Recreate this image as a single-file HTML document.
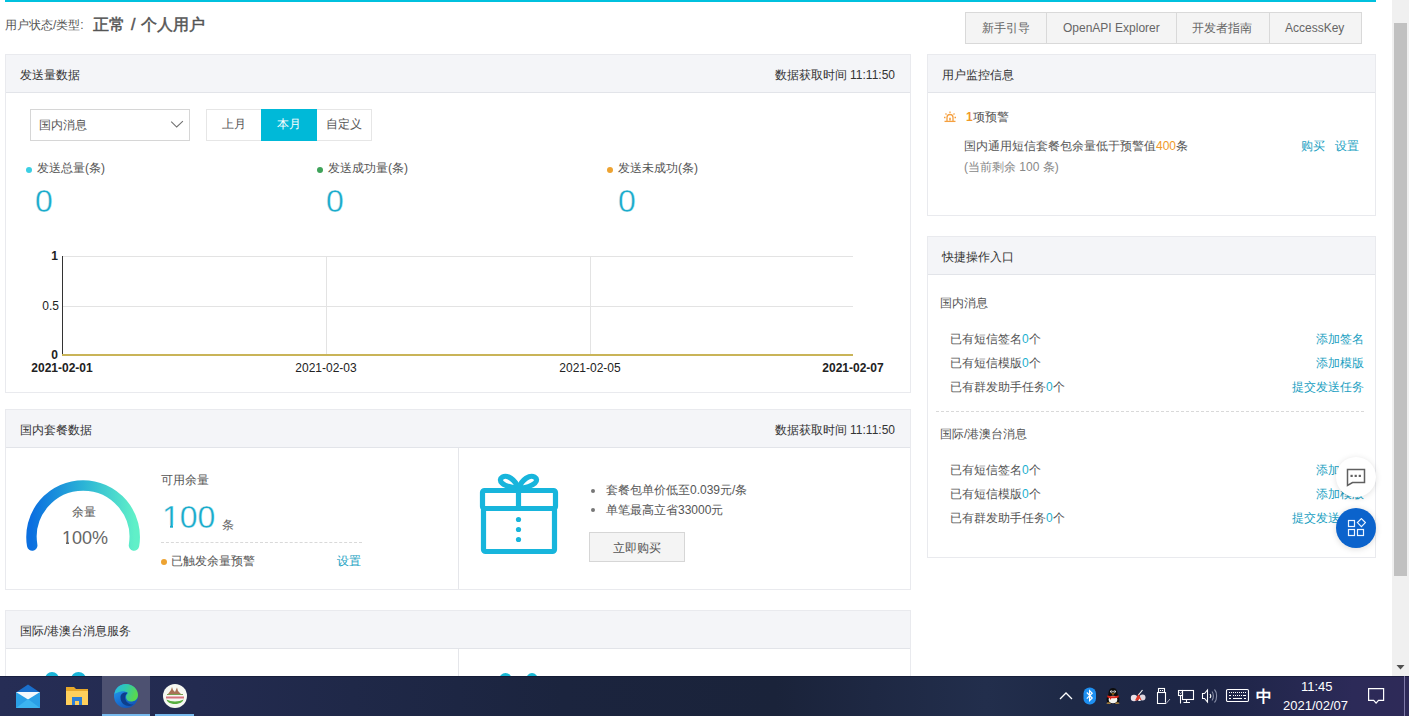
<!DOCTYPE html>
<html><head><meta charset="utf-8">
<style>
*{margin:0;padding:0;box-sizing:border-box}
html,body{width:1409px;height:716px;overflow:hidden;background:#fff}
body{position:relative;font-family:"Liberation Sans",sans-serif;font-size:12px;color:#555}
.a{position:absolute;white-space:nowrap}
.panel{position:absolute;border:1px solid #e9eaee;background:#fff}
.ph{position:absolute;left:0;right:0;top:0;height:38px;background:#f4f5f8;border-bottom:1px solid #e2e4e9}
.pt{position:absolute;left:14px;top:13px;color:#333;font-size:12px;line-height:14px}
.ptime{position:absolute;right:15px;top:13px;color:#333;font-size:12px;line-height:14px}
.link{color:#1b9fc2}
.cy{color:#1bb0d0}
.or{color:#f09a2a}
</style></head>
<body>
<!-- top cyan bar -->
<div class="a" style="left:5px;top:0;width:1371px;height:2px;background:#00c1de"></div>

<div class="a" style="left:5px;top:18px;font-size:12px;line-height:14px;color:#555">用户状态/类型:</div>
<div class="a" style="left:93px;top:15px;font-size:16px;line-height:20px;color:#555;-webkit-text-stroke:0.5px #555;word-spacing:1.5px">正常 / 个人用户</div>

<!-- top-right buttons -->
<div class="a" style="left:965px;top:12px;width:397px;height:32px;background:#f4f4f4;border:1px solid #d9d9d9"></div>
<div class="a" style="left:1046px;top:13px;width:1px;height:30px;background:#d9d9d9"></div>
<div class="a" style="left:1176px;top:13px;width:1px;height:30px;background:#d9d9d9"></div>
<div class="a" style="left:1269px;top:13px;width:1px;height:30px;background:#d9d9d9"></div>
<div class="a" style="left:982px;top:21px;line-height:14px;color:#666">新手引导</div>
<div class="a" style="left:1063px;top:21px;line-height:14px;color:#666">OpenAPI Explorer</div>
<div class="a" style="left:1192px;top:21px;line-height:14px;color:#666">开发者指南</div>
<div class="a" style="left:1285px;top:21px;line-height:14px;color:#666">AccessKey</div>

<!-- panel 1 -->
<div class="panel" style="left:5px;top:54px;width:906px;height:339px">
  <div class="ph"><div class="pt">发送量数据</div><div class="ptime">数据获取时间 11:11:50</div></div>
</div>


<!-- panel1 content -->
<div class="a" style="left:30px;top:109px;width:160px;height:32px;border:1px solid #d6d6d6;background:#fff"></div>
<div class="a" style="left:39px;top:118px;line-height:14px;color:#555">国内消息</div>
<svg class="a" style="left:168px;top:119px" width="16" height="10" viewBox="0 0 16 10"><path d="M3.2 2.6 L8.7 8 L14.9 2.2" fill="none" stroke="#707070" stroke-width="1.05"/></svg>
<div class="a" style="left:206px;top:109px;width:166px;height:32px;border:1px solid #e6e6e6;background:#fff"></div>
<div class="a" style="left:261px;top:109px;width:56px;height:32px;background:#00b9d8"></div>
<div class="a" style="left:222px;top:117px;line-height:14px;color:#555">上月</div>
<div class="a" style="left:277px;top:117px;line-height:14px;color:#fff">本月</div>
<div class="a" style="left:326px;top:117px;line-height:14px;color:#555">自定义</div>

<div class="a" style="left:26px;top:167px;width:6px;height:6px;border-radius:50%;background:#3ccfe4"></div>
<div class="a" style="left:37px;top:161px;line-height:14px;color:#555">发送总量(条)</div>
<div class="a" style="left:35px;top:183px;font-size:32px;line-height:37px;color:#1aabcb;-webkit-text-stroke:0.35px #fff">0</div>
<div class="a" style="left:317px;top:167px;width:6px;height:6px;border-radius:50%;background:#3fa35a"></div>
<div class="a" style="left:328px;top:161px;line-height:14px;color:#555">发送成功量(条)</div>
<div class="a" style="left:326px;top:183px;font-size:32px;line-height:37px;color:#1aabcb;-webkit-text-stroke:0.35px #fff">0</div>
<div class="a" style="left:607px;top:167px;width:6px;height:6px;border-radius:50%;background:#eda331"></div>
<div class="a" style="left:618px;top:161px;line-height:14px;color:#555">发送未成功(条)</div>
<div class="a" style="left:618px;top:183px;font-size:32px;line-height:37px;color:#1aabcb;-webkit-text-stroke:0.35px #fff">0</div>

<!-- chart -->
<svg class="a" style="left:0;top:240px" width="910" height="140" viewBox="0 240 910 140">
  <g stroke="#e3e3e3" stroke-width="1" fill="none">
    <path d="M62 256.5 H853"/>
    <path d="M62 306.5 H853"/>
    <path d="M326.5 256 V355"/>
    <path d="M590.5 256 V355"/>
  </g>
  <path d="M62.5 256 V356" stroke="#333" stroke-width="1"/>
  <path d="M62 355 H853" stroke="#c9b458" stroke-width="2"/>
  <g font-family="Liberation Sans" font-size="12" fill="#222">
    <text x="58" y="260" text-anchor="end" font-weight="bold">1</text>
    <text x="59" y="310" text-anchor="end">0.5</text>
    <text x="58" y="359" text-anchor="end" font-weight="bold">0</text>
    <text x="62" y="372" text-anchor="middle" font-weight="bold">2021-02-01</text>
    <text x="326" y="372" text-anchor="middle">2021-02-03</text>
    <text x="590" y="372" text-anchor="middle">2021-02-05</text>
    <text x="853" y="372" text-anchor="middle" font-weight="bold">2021-02-07</text>
  </g>
</svg>

<!-- right panel 1 -->
<div class="panel" style="left:927px;top:54px;width:449px;height:162px">
  <div class="ph"><div class="pt">用户监控信息</div></div>
</div>

<!-- right panel 2 -->
<div class="panel" style="left:927px;top:236px;width:449px;height:322px">
  <div class="ph"><div class="pt">快捷操作入口</div></div>
</div>

<!-- panel 2 -->
<div class="panel" style="left:5px;top:409px;width:906px;height:181px">
  <div class="ph"><div class="pt">国内套餐数据</div><div class="ptime">数据获取时间 11:11:50</div></div>
</div>

<!-- panel 3 -->
<div class="panel" style="left:5px;top:610px;width:906px;height:120px">
  <div class="ph"><div class="pt">国际/港澳台消息服务</div></div>
</div>


<!-- right panel 1 content -->
<svg class="a" style="left:943px;top:110px" width="14" height="13" viewBox="0 0 14 13">
  <g fill="none" stroke="#f5a040" stroke-width="1.3">
    <path d="M4 11 V7.5 a3 3 0 0 1 6 0 V11"/>
    <path d="M1.5 11.4 H12.5"/>
    <path d="M1 7.5 H2.5 M11.5 7.5 H13 M7 1.5 V3 M2.5 3.5 L3.5 4.5 M11.5 3.5 L10.5 4.5"/>
  </g>
  <path d="M6.2 7.8 h1.6 v2.6 h-1.6z" fill="#f5a040"/>
</svg>
<div class="a" style="left:966px;top:110px;line-height:14px;color:#555"><span class="or" style="font-weight:bold">1</span>项预警</div>
<div class="a" style="left:964px;top:139px;line-height:14px;color:#555">国内通用短信套餐包余量低于预警值<span class="or">400</span>条</div>
<div class="a" style="left:964px;top:160px;line-height:14px;color:#888">(当前剩余 100 条)</div>
<div class="a link" style="left:1301px;top:139px;line-height:14px">购买</div>
<div class="a link" style="left:1335px;top:139px;line-height:14px">设置</div>

<!-- right panel 2 content -->
<div class="a" style="left:940px;top:296px;line-height:14px;color:#555">国内消息</div>
<div class="a" style="left:950px;top:332px;line-height:14px;color:#555">已有短信签名<span class="cy">0</span>个</div>
<div class="a" style="left:950px;top:356px;line-height:14px;color:#555">已有短信模版<span class="cy">0</span>个</div>
<div class="a" style="left:950px;top:380px;line-height:14px;color:#555">已有群发助手任务<span class="cy">0</span>个</div>
<div class="a link" style="right:45px;top:332px;line-height:14px">添加签名</div>
<div class="a link" style="right:45px;top:356px;line-height:14px">添加模版</div>
<div class="a link" style="right:45px;top:380px;line-height:14px">提交发送任务</div>
<div class="a" style="left:936px;top:411px;width:428px;height:0;border-top:1px dashed #d9d9d9"></div>
<div class="a" style="left:940px;top:427px;line-height:14px;color:#555">国际/港澳台消息</div>
<div class="a" style="left:950px;top:463px;line-height:14px;color:#555">已有短信签名<span class="cy">0</span>个</div>
<div class="a" style="left:950px;top:487px;line-height:14px;color:#555">已有短信模版<span class="cy">0</span>个</div>
<div class="a" style="left:950px;top:511px;line-height:14px;color:#555">已有群发助手任务<span class="cy">0</span>个</div>
<div class="a link" style="right:45px;top:463px;line-height:14px">添加签名</div>
<div class="a link" style="right:45px;top:487px;line-height:14px">添加模版</div>
<div class="a link" style="right:45px;top:511px;line-height:14px">提交发送任务</div>

<!-- floating buttons -->
<div class="a" style="left:1336px;top:457px;width:40px;height:40px;border-radius:50%;background:#fff;box-shadow:0 1px 6px rgba(0,0,0,0.12)"></div>
<svg class="a" style="left:1346px;top:468px" width="20" height="19" viewBox="0 0 20 19">
  <path d="M1.5 1.5 H18.5 V14.5 H6.5 L1.5 17.5 Z" fill="none" stroke="#606060" stroke-width="1.5" stroke-linejoin="miter"/>
  <rect x="4.5" y="6.8" width="2.2" height="2.2" fill="#606060"/><rect x="8.6" y="6.8" width="2.2" height="2.2" fill="#606060"/><rect x="12.7" y="6.8" width="2.2" height="2.2" fill="#606060"/>
</svg>
<div class="a" style="left:1336px;top:508px;width:40px;height:40px;border-radius:50%;background:#0b63cc;box-shadow:0 1px 6px rgba(0,0,0,0.15)"></div>
<svg class="a" style="left:1346px;top:518px" width="20" height="20" viewBox="0 0 20 20">
  <g fill="none" stroke="#eef6ff" stroke-width="1.2">
    <rect x="2.5" y="2.5" width="6" height="6"/>
    <rect x="2.5" y="11.5" width="6" height="6"/>
    <rect x="11.5" y="11.5" width="6" height="6"/>
    <path d="M15.4 0.6 L19.4 4.6 L15.4 8.6 L11.4 4.6 Z"/>
  </g>
</svg>

<!-- panel 2 content -->
<svg class="a" style="left:20px;top:472px" width="130" height="85" viewBox="20 472 130 85">
  <defs><linearGradient id="g1" x1="0" y1="0" x2="1" y2="0">
    <stop offset="0" stop-color="#0b6fe0"/><stop offset="0.5" stop-color="#2bb3d6"/><stop offset="1" stop-color="#60f0c8"/>
  </linearGradient></defs>
  <path d="M32.2 545.5 A51.6 51.6 0 1 1 134 545.5" fill="none" stroke="url(#g1)" stroke-width="10.5" stroke-linecap="round"/>
</svg>
<div class="a" style="left:72px;top:505px;line-height:14px;color:#555">余量</div>
<div class="a" style="left:62px;top:528px;font-size:18px;line-height:20px;color:#666">100%</div>
<div class="a" style="left:62px;top:542px;width:4px;height:2px;background:#fff"></div>
<div class="a" style="left:69px;top:542px;width:3px;height:2px;background:#fff"></div>
<div class="a" style="left:161px;top:473px;line-height:14px;color:#555">可用余量</div>
<div class="a" style="left:162px;top:499px;font-size:32px;line-height:36px;color:#1aabcb;-webkit-text-stroke:0.35px #fff">100</div>
<div class="a" style="left:162px;top:525px;width:8px;height:4px;background:#fff"></div>
<div class="a" style="left:173px;top:525px;width:7px;height:4px;background:#fff"></div>
<div class="a" style="left:222px;top:518px;line-height:14px;color:#666">条</div>
<div class="a" style="left:161px;top:542px;width:201px;height:0;border-top:1px dashed #d9d9d9"></div>
<div class="a" style="left:161px;top:559px;width:6px;height:6px;border-radius:50%;background:#eda331"></div>
<div class="a" style="left:171px;top:554px;line-height:14px;color:#555">已触发余量预警</div>
<div class="a link" style="left:337px;top:554px;line-height:14px">设置</div>
<div class="a" style="left:458px;top:448px;width:1px;height:141px;background:#e5e6ea"></div>

<svg class="a" style="left:476px;top:470px" width="86" height="88" viewBox="476 470 86 88">
  <g fill="none" stroke="#17b5dc" stroke-width="5.2" stroke-linejoin="round" stroke-linecap="round">
    <rect x="482.5" y="490.5" width="73" height="18" rx="2"/>
    <rect x="483.5" y="508.5" width="71" height="43" rx="2"/>
    <path d="M518.5 490.5 V508.5"/>
    <path d="M518.5 488.5 C515 479 507 474.5 502.5 477 C497.5 480 501 486.5 518.5 488.5 Z"/>
    <path d="M518.5 488.5 C522 479 530 474.5 534.5 477 C539.5 480 536 486.5 518.5 488.5 Z"/>
  </g>
  <g fill="#17b5dc"><circle cx="518.5" cy="519.5" r="2.6"/><circle cx="518.5" cy="529.5" r="2.6"/><circle cx="518.5" cy="539.5" r="2.6"/></g>
</svg>
<div class="a" style="left:591px;top:489px;width:4px;height:4px;border-radius:50%;background:#777"></div>
<div class="a" style="left:606px;top:483px;line-height:14px;color:#555">套餐包单价低至0.039元/条</div>
<div class="a" style="left:591px;top:508px;width:4px;height:4px;border-radius:50%;background:#777"></div>
<div class="a" style="left:606px;top:503px;line-height:14px;color:#555">单笔最高立省33000元</div>
<div class="a" style="left:589px;top:532px;width:96px;height:30px;border:1px solid #d6d6d6;background:#f4f4f4"></div>
<div class="a" style="left:613px;top:541px;line-height:14px;color:#555">立即购买</div>

<!-- panel 3 content -->
<div class="a" style="left:458px;top:649px;width:1px;height:30px;background:#e5e6ea"></div>
<div class="a" style="left:45px;top:672px;width:14px;height:14px;border-radius:50%;background:#1ab4d8"></div>
<div class="a" style="left:71px;top:672px;width:15px;height:14px;border-radius:50%;background:#1ab4d8"></div>
<div class="a" style="left:499px;top:673px;width:13px;height:13px;border-radius:50%;background:#18b8d4"></div>
<div class="a" style="left:526px;top:673px;width:12px;height:13px;border-radius:50%;background:#18b8d4"></div>

<!-- scrollbar -->
<div class="a" style="left:1392px;top:0;width:17px;height:676px;background:#f0f0f0"></div>
<div class="a" style="left:1394px;top:23px;width:13px;height:553px;background:#c1c1c1"></div>

<!-- taskbar -->
<div class="a" style="left:0;top:676px;width:1409px;height:40px;background:linear-gradient(90deg,#262d55 0%,#232b50 14%,#1f2848 25%,#1b243e 40%,#1a233a 55%,#1e2843 62%,#222e4c 70%,#1e2946 76%,#1d2546 86%,#2c2a58 96%,#2e2a58 100%)"></div>

<!-- scrollbar arrows -->
<svg class="a" style="left:1392px;top:660px" width="17" height="14" viewBox="0 0 17 14"><path d="M4.5 5 L8.5 9.5 L12.5 5 Z" fill="#505050"/></svg>

<div class="a" style="left:0;top:676px;width:1409px;height:1px;background:rgba(12,16,40,0.45)"></div>
<!-- taskbar icons -->
<svg class="a" style="left:14px;top:682px" width="28" height="28" viewBox="0 0 28 28">
  <path d="M2 10.5 L14 2.5 L26 10.5 Z" fill="#1a6fcc"/>
  <path d="M2 10 H26 V26 H2 Z" fill="#2a9fe6"/>
  <path d="M2 10 H26 L14 17.5 Z" fill="#f4f8fc"/>
  <path d="M2 26 L14 17 L26 26 Z" fill="#3cb4f0"/>
</svg>
<svg class="a" style="left:64px;top:683px" width="26" height="26" viewBox="0 0 26 26">
  <path d="M2 4 H10 L12 6 H24 V22 H2 Z" fill="#e8a92a"/>
  <path d="M2 8 H24 V22 H2 Z" fill="#ffd05c"/>
  <path d="M8 14 H18 V22 H15 V18 H11 V22 H8 Z" fill="#2d7fd6"/>
</svg>
<div class="a" style="left:102px;top:676px;width:48px;height:40px;background:#4d5171"></div>
<div class="a" style="left:102px;top:714px;width:48px;height:2px;background:#76b9ed"></div>
<svg class="a" style="left:112px;top:682px" width="28" height="28" viewBox="0 0 28 28">
  <defs>
    <linearGradient id="e1" x1="0" y1="0" x2="0.6" y2="1"><stop offset="0" stop-color="#2aa6ee"/><stop offset="0.55" stop-color="#1a78d8"/><stop offset="1" stop-color="#1456b8"/></linearGradient>
    <linearGradient id="e2" x1="0" y1="0" x2="1" y2="0.3"><stop offset="0" stop-color="#28b8e8"/><stop offset="0.5" stop-color="#30c8b0"/><stop offset="1" stop-color="#58d850"/></linearGradient>
  </defs>
  <circle cx="14" cy="14" r="12" fill="url(#e1)"/>
  <path d="M2.5 12 C3.5 5.5 8.5 2 14 2 C20.5 2 26 7 26 13 C26 17.5 22.5 19.5 19 19.5 C16 19.5 14 17.5 14 15 C14 13 15.5 11.5 16 11 C14 9.5 11.5 9 9 9.5 C6 10.2 3.8 11.2 2.5 12 Z" fill="url(#e2)"/>
  <path d="M8.5 15.5 C8.5 12 11.5 10 15.5 10.8 C13.5 12.5 12.8 14.8 13.5 17.5 C14.5 20.5 17.5 22.8 21.5 22.5 C18 25.5 8.5 24 8.5 15.5 Z" fill="#0d3f8c"/>
</svg>
<div class="a" style="left:155px;top:714px;width:39px;height:2px;background:#76b9ed"></div>
<svg class="a" style="left:162px;top:683px" width="26" height="26" viewBox="0 0 26 26">
  <circle cx="13" cy="13" r="12" fill="#f6f8f2"/>
  <path d="M6 11 L9 7 L10 4 L11 7 L13 9 L15 4.5 L16 8 L19 11 Z" fill="#9a5a3a" opacity="0.85"/>
  <path d="M5 11 H21 V12 H5 Z" fill="#7aa050"/>
  <path d="M4 13.5 H22 V15.5 H4 Z" fill="#d05060" opacity="0.8"/>
  <path d="M4.5 16.5 C9 19 17 19 21.5 16.5 C20 22.5 6 22.5 4.5 16.5 Z" fill="#58b040"/>
</svg>

<!-- tray -->
<svg class="a" style="left:1059px;top:690px" width="14" height="11" viewBox="0 0 14 11"><path d="M1 9 L7 3 L13 9" fill="none" stroke="#fff" stroke-width="1.3"/></svg>
<svg class="a" style="left:1083px;top:687px" width="14" height="18" viewBox="0 0 14 18">
  <rect x="0.5" y="0.5" width="12.5" height="17" rx="6" fill="#1e8ff0"/>
  <path d="M3.8 5.5 L9.2 11 L6.6 13.6 V3.6 L9.2 6.2 L3.8 11.6" fill="none" stroke="#fff" stroke-width="1.2"/>
</svg>
<svg class="a" style="left:1104px;top:687px" width="18" height="18" viewBox="0 0 18 18">
  <path d="M9 1 C5.5 1 4.5 4 4.5 7 C3 9 2 12 3 15 C4 17 14 17 15 15 C16 12 15 9 13.5 7 C13.5 4 12.5 1 9 1 Z" fill="#0d0d0d"/>
  <ellipse cx="9" cy="12.5" rx="4.3" ry="3.8" fill="#f4f4ee"/>
  <circle cx="7.4" cy="4.6" r="1.2" fill="#fff"/><circle cx="10.6" cy="4.6" r="1.2" fill="#fff"/>
  <circle cx="7.6" cy="4.8" r="0.5" fill="#000"/><circle cx="10.4" cy="4.8" r="0.5" fill="#000"/>
  <path d="M7 6.6 H11 L9 7.8 Z" fill="#f5a623"/>
  <path d="M3.5 8.2 C6 9.5 12 9.5 14.5 8.2 L14.8 10.2 C12 11.5 6 11.5 3.2 10.2 Z" fill="#d9251c"/>
  <path d="M5 10 L6.5 13 L7.5 10.5 Z" fill="#d9251c"/>
  <path d="M2.5 16.5 C3 15 6 15 7 16.8 Z M15.5 16.5 C15 15 12 15 11 16.8 Z" fill="#f0b040"/>
</svg>
<svg class="a" style="left:1129px;top:687px" width="18" height="17" viewBox="0 0 18 17">
  <circle cx="5" cy="11" r="3.2" fill="#e8e0e8"/><circle cx="13.5" cy="10.5" r="3" fill="#e0d8e0"/>
  <path d="M6 13.5 L9.5 6.5 L12.5 13 Z" fill="#e03a2a"/>
  <path d="M9.5 8 L13.5 3" stroke="#f0f0f0" stroke-width="1.2" fill="none"/>
  <path d="M9 14 L10.5 11.5 L12 14 Z" fill="#f4f4f4"/>
</svg>
<svg class="a" style="left:1155px;top:686px" width="16" height="20" viewBox="0 0 16 20">
  <g fill="none" stroke="#fff" stroke-width="1.1">
    <rect x="3.5" y="2.5" width="6" height="4"/>
    <path d="M2.5 6.5 H10.5 V17.5 H2.5 Z"/>
  </g>
  <rect x="5" y="4" width="1" height="1" fill="#fff"/><rect x="7" y="4" width="1" height="1" fill="#fff"/>
  <path d="M10 16 L11.3 17.3 L15 13" fill="none" stroke="#aab" stroke-width="1"/>
</svg>
<svg class="a" style="left:1176px;top:688px" width="20" height="17" viewBox="0 0 20 17">
  <g fill="none" stroke="#fff" stroke-width="1.1">
    <rect x="2.5" y="2.5" width="4" height="5"/>
    <path d="M4.5 7.5 V15.5"/>
    <rect x="6.5" y="2.5" width="11" height="9"/>
    <path d="M10.5 11.5 V14.5 M7.5 14.5 H14"/>
  </g>
  <path d="M3.5 4.5 L4.5 5.5 L5.5 4.5" stroke="#fff" stroke-width="0.8" fill="none"/>
</svg>
<svg class="a" style="left:1201px;top:688px" width="18" height="16" viewBox="0 0 18 16">
  <g fill="none" stroke="#fff" stroke-width="1.1">
    <path d="M1.5 5.5 H3.5 L6.5 2 V14 L3.5 10.5 H1.5 Z"/>
    <path d="M9 6 C9.8 7 9.8 9 9 10"/>
  </g>
  <g fill="none" stroke="#8a90a8" stroke-width="1.1">
    <path d="M11 3.5 C12.8 5.5 12.8 10.5 11 12.5"/>
    <path d="M13.5 1.5 C16.3 4.5 16.3 11.5 13.5 14.5"/>
  </g>
</svg>
<svg class="a" style="left:1225px;top:688px" width="25" height="15" viewBox="0 0 25 15">
  <rect x="1.5" y="1.5" width="22" height="12" rx="1.2" fill="none" stroke="#fff" stroke-width="1.1"/>
  <g fill="#fff" shape-rendering="crispEdges"><rect x="4" y="4" width="1" height="1"/><rect x="6" y="4" width="1" height="1"/><rect x="8" y="4" width="1" height="1"/><rect x="10" y="4" width="1" height="1"/><rect x="12" y="4" width="1" height="1"/><rect x="14" y="4" width="1" height="1"/><rect x="16" y="4" width="1" height="1"/><rect x="18" y="4" width="1" height="1"/><rect x="20" y="4" width="1" height="1"/><rect x="4" y="7" width="2" height="1"/><rect x="8" y="7" width="1" height="1"/><rect x="10" y="7" width="1" height="1"/><rect x="12" y="7" width="1" height="1"/><rect x="14" y="7" width="1" height="1"/><rect x="16" y="7" width="1" height="1"/><rect x="18" y="7" width="1" height="1"/><rect x="19" y="7" width="2" height="1"/><rect x="4" y="10" width="2" height="1"/><rect x="8" y="10" width="9" height="1"/><rect x="19" y="10" width="2" height="1"/></g>
</svg>
<div class="a" style="left:1256px;top:687px;font-size:16px;line-height:20px;color:#fff;font-weight:bold">中</div>
<div class="a" style="left:1301px;top:679px;font-size:13px;line-height:15px;color:#fff">11:45</div>
<div class="a" style="left:1283px;top:698px;font-size:13px;line-height:15px;color:#fff">2021/02/07</div>
<svg class="a" style="left:1368px;top:688px" width="18" height="17" viewBox="0 0 18 17">
  <path d="M0.6 0.6 H15.6 V12.4 H10.5 L8.1 15.2 L5.7 12.4 H0.6 Z" fill="none" stroke="#fff" stroke-width="1.2"/>
</svg>
<div class="a" style="left:1404px;top:676px;width:1px;height:40px;background:#7e7aa8"></div>

</body></html>
